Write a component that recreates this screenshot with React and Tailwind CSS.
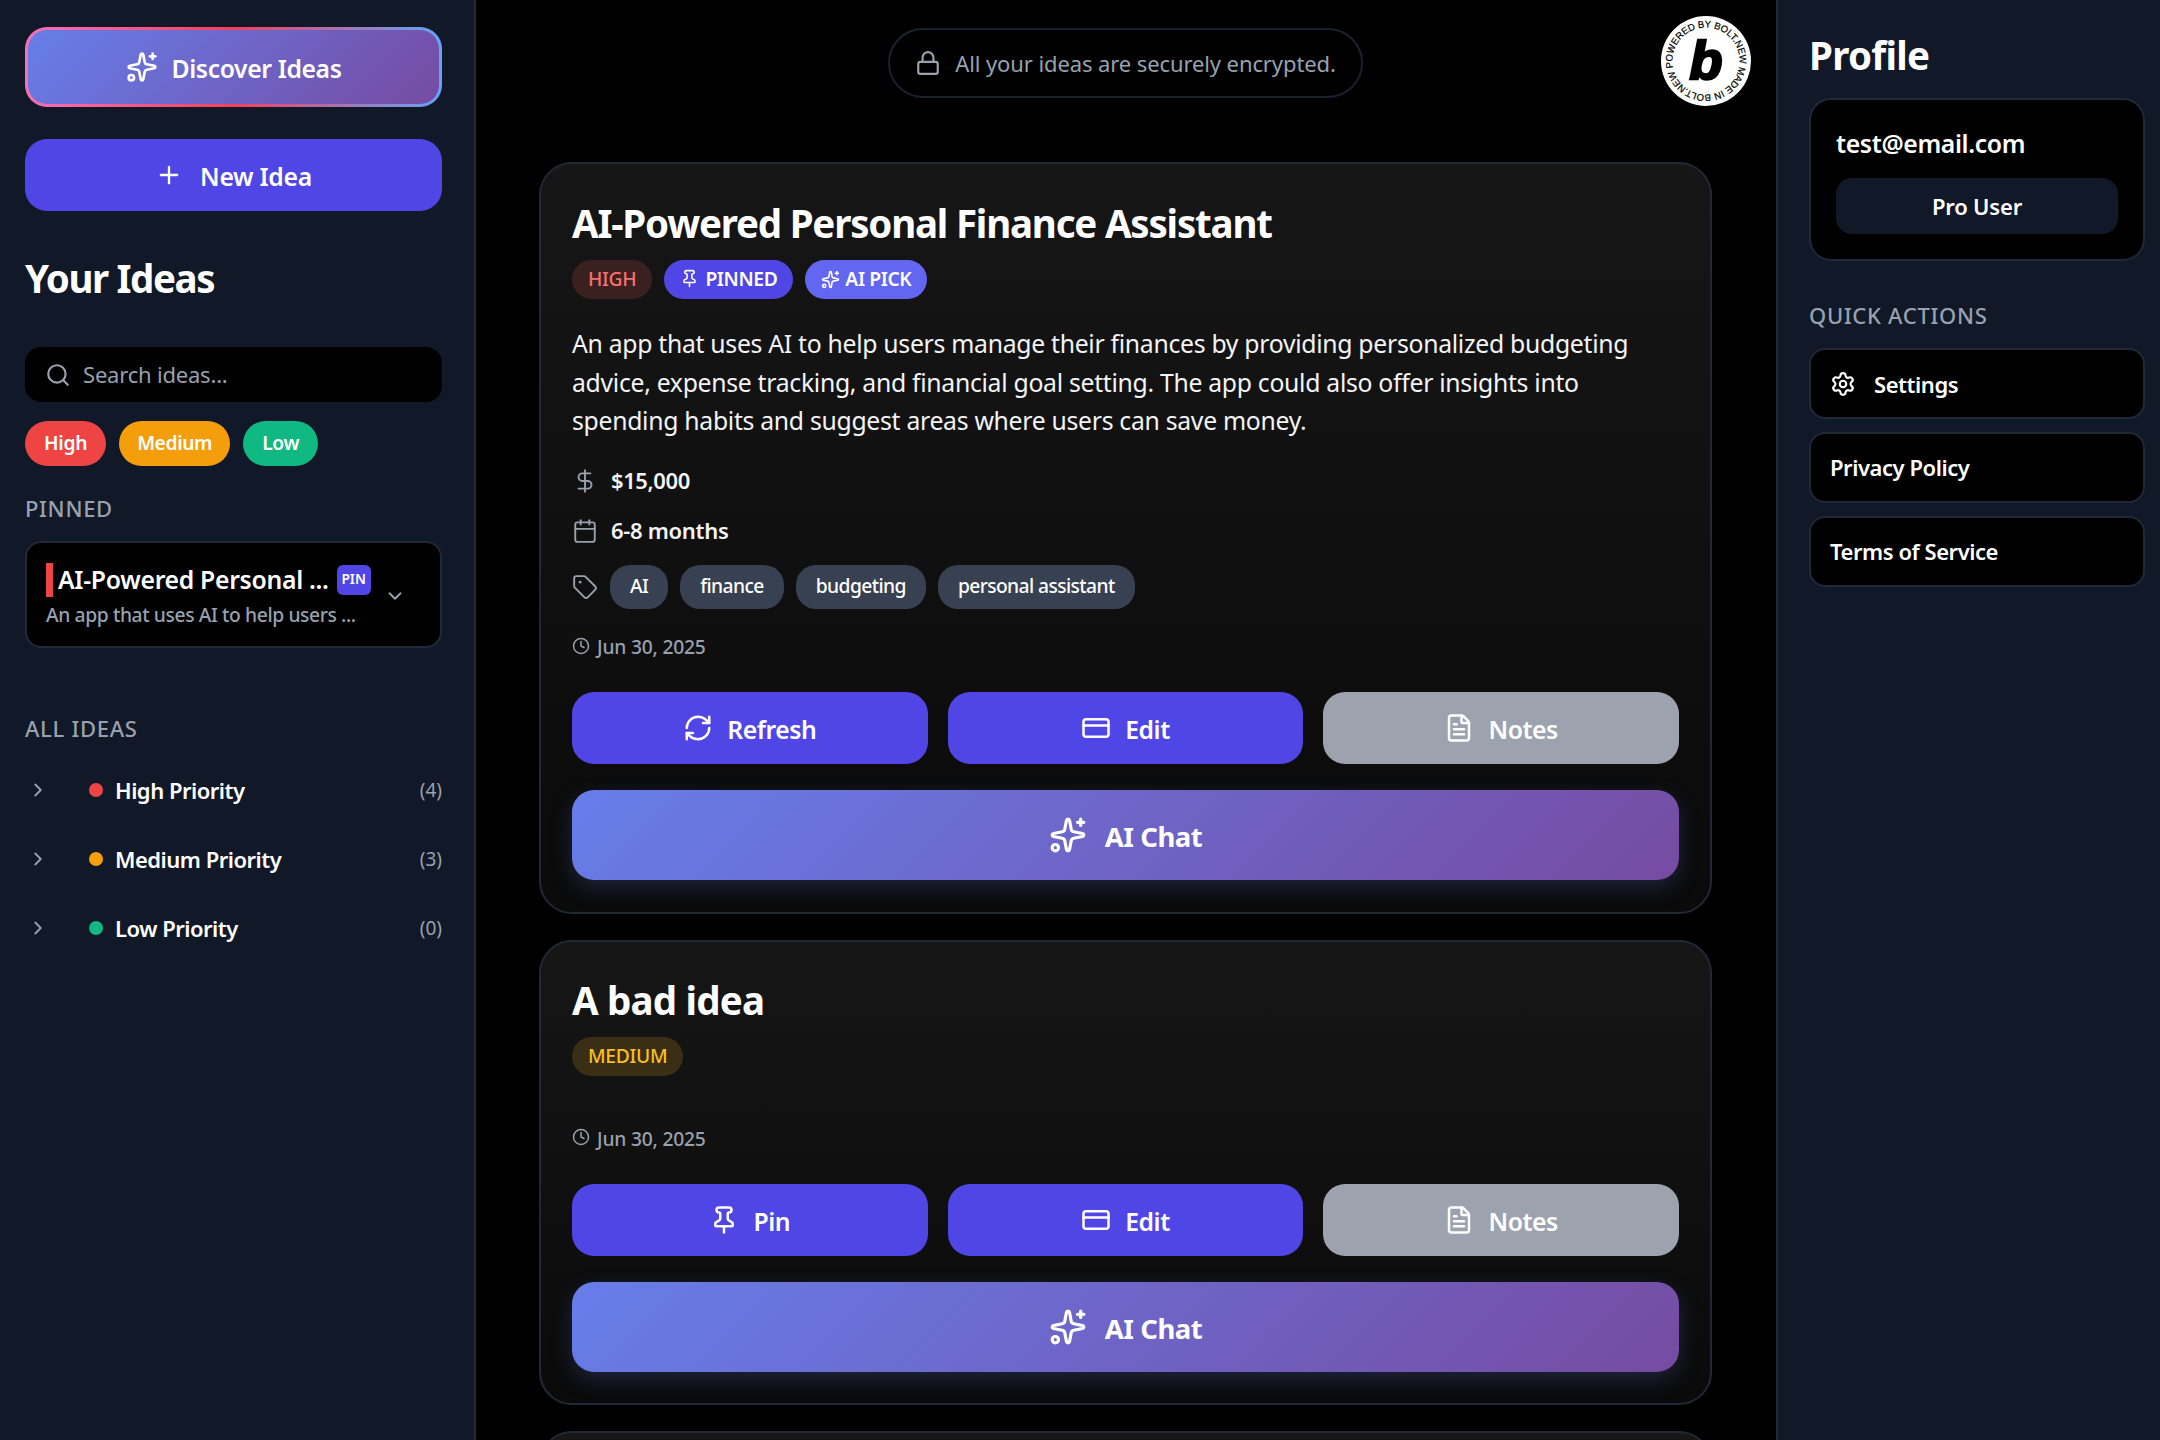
import {
  Sparkles, Plus, Search, ChevronDown, ChevronRight, Pin, DollarSign, Calendar,
  Tag, Clock, RefreshCw, CreditCard, FileText, Settings, Lock,
} from 'lucide-react';

const AI_GRADIENT = 'bg-[linear-gradient(135deg,#667eea_0%,#764ba2_100%)]';

function BoltBadge() {
  return (
    <svg viewBox="0 0 92 92" className="absolute right-[24px] top-[15px] w-[92px] h-[92px]">
      <circle cx="46" cy="46" r="45" fill="#fff" />
      <defs>
        <path id="ring" d="M 13.2 53 A 33.5 33.5 0 0 1 78.8 39 A 33.5 33.5 0 0 1 13.2 53" />
      </defs>
      <text fontFamily="'Liberation Sans', sans-serif" fontSize="9.6" stroke="#000" strokeWidth="0.2" fill="#000">
        <textPath href="#ring" textLength="208" lengthAdjust="spacing">POWERED BY BOLT.NEW MADE IN BOLT.NEW</textPath>
      </text>
      <text
        x="46" y="64" textAnchor="middle"
        fontFamily="'Liberation Sans', sans-serif" fontSize="54" fontWeight="700" fontStyle="italic"
        stroke="#000" strokeWidth="2.5" fill="#000"
      >
        b
      </text>
    </svg>
  );
}

function PriorityRow({ dot, label, count }) {
  return (
    <div className="flex items-center h-[69px]">
      <ChevronRight className="w-[22px] h-[22px] text-gray-400 ml-[2px] mr-[40px] -mt-[2px]" strokeWidth={2} />
      <span className={`w-[14px] h-[14px] rounded-full mr-[12px] -mt-[2px] ${dot}`} />
      <span className="text-[22px] font-semibold tracking-[-0.5px] text-white flex-1">{label}</span>
      <span className="text-[19px] text-gray-400">{count}</span>
    </div>
  );
}

function LeftSidebar() {
  return (
    <aside className="w-[476px] shrink-0 h-full bg-[#111827] border-r-2 border-[#1f2937] pl-[25px] pr-[32px] pt-[27px]">
      <div className="p-[3px] rounded-[22px] bg-[linear-gradient(90deg,#f472b6_0%,#f43f5e_50%,#60a5fa_100%)]">
        <button className={`w-full h-[74px] rounded-[19px] flex items-center justify-center gap-[14px] pt-[3px] text-[24.75px] font-semibold tracking-[-0.4px] text-white ${AI_GRADIENT}`}>
          <Sparkles className="w-[32px] h-[32px] -mt-[3px]" strokeWidth={2} />
          Discover Ideas
        </button>
      </div>
      <button className="w-full h-[72px] mt-[32px] rounded-[22px] flex items-center justify-center gap-[17px] pt-[3px] bg-[#4f46e5] text-[24.75px] font-semibold tracking-[-0.3px] text-white">
        <Plus className="w-[28px] h-[28px] -mt-[3px]" strokeWidth={2} />
        New Idea
      </button>

      <h2 className="mt-[41px] h-[52px] leading-[52px] text-[38.5px] font-bold tracking-[-1.4px] text-white">Your Ideas</h2>

      <div className="mt-[43px] h-[55px] rounded-[16px] bg-black flex items-center pl-[20px] gap-[12px]">
        <Search className="w-[26px] h-[26px] text-gray-400" strokeWidth={2} />
        <span className="text-[22px] tracking-[-0.2px] text-gray-400">Search ideas...</span>
      </div>

      <div className="flex gap-[13px] mt-[19px]">
        <span className="h-[45px] px-[19px] rounded-full bg-[#ef4444] text-white text-[19.25px] font-semibold tracking-[-0.3px] flex items-center">High</span>
        <span className="h-[45px] px-[18px] rounded-full bg-[#f59e0b] text-white text-[19.25px] font-semibold tracking-[-0.4px] flex items-center">Medium</span>
        <span className="h-[45px] px-[19px] rounded-full bg-[#10b981] text-white text-[19.25px] font-semibold tracking-[-0.3px] flex items-center">Low</span>
      </div>

      <div className="mt-[27px] h-[30px] leading-[30px] text-[22px] font-medium text-gray-400 tracking-[0.7px]">PINNED</div>

      <div className="mt-[18px] h-[107px] rounded-[16px] bg-black border-2 border-[#1f2937] pl-[19px] pr-[34px] pt-[2px] flex items-center">
        <div className="flex-1 min-w-0">
          <div className="flex items-center h-[36px]">
            <span className="w-[7px] h-[34px] bg-[#ef4444] mr-[5px] shrink-0" />
            <span className="text-[24.75px] font-semibold tracking-[-0.3px] text-white whitespace-nowrap">AI-Powered Personal ...</span>
            <span className="ml-[8px] w-[34px] h-[30px] rounded-[6px] bg-[#4f46e5] text-white text-[13.75px] font-semibold flex items-center justify-center shrink-0">PIN</span>
          </div>
          <div className="text-[19.25px] font-medium tracking-[-0.38px] text-gray-400 mt-[3px] whitespace-nowrap">An app that uses AI to help users ...</div>
        </div>
        <ChevronDown className="w-[22px] h-[22px] text-gray-400 shrink-0" strokeWidth={2} />
      </div>

      <div className="mt-[65px] h-[30px] leading-[30px] text-[22px] font-medium text-gray-400 tracking-[0.7px]">ALL IDEAS</div>
      <div className="mt-[13px]">
        <PriorityRow dot="bg-[#ef4444]" label="High Priority" count="(4)" />
        <PriorityRow dot="bg-[#f59e0b]" label="Medium Priority" count="(3)" />
        <PriorityRow dot="bg-[#10b981]" label="Low Priority" count="(0)" />
      </div>
    </aside>
  );
}

function ActionButton({ icon: Icon, label, color }) {
  return (
    <button className={`h-[72px] rounded-[22px] flex items-center justify-center gap-[14px] pt-[4px] text-[24.75px] font-semibold tracking-[-0.45px] text-white ${color}`}>
      <Icon className="w-[30px] h-[30px] -mt-[4px]" strokeWidth={2} />
      {label}
    </button>
  );
}

function IdeaActions({ firstIcon, firstLabel }) {
  return (
    <>
      <div className="grid grid-cols-3 gap-[20px]">
        <ActionButton icon={firstIcon} label={firstLabel} color="bg-[#4f46e5]" />
        <ActionButton icon={CreditCard} label="Edit" color="bg-[#4f46e5]" />
        <ActionButton icon={FileText} label="Notes" color="bg-[#9ca3af]" />
      </div>
      <button className={`w-full h-[90px] mt-[26px] rounded-[22px] flex items-center justify-center gap-[18px] pt-[4px] text-[27.5px] font-bold tracking-[-0.45px] text-white shadow-[0_8px_22px_rgba(102,126,234,0.22)] ${AI_GRADIENT}`}>
        <Sparkles className="w-[38px] h-[38px] -mt-[4px]" strokeWidth={2} />
        AI Chat
      </button>
    </>
  );
}

function DateLine({ className }) {
  return (
    <div className={`flex items-center gap-[7px] text-[19.25px] font-medium tracking-[-0.2px] text-gray-400 ${className}`}>
      <Clock className="w-[18px] h-[18px] -mt-[4px]" strokeWidth={2} />
      Jun 30, 2025
    </div>
  );
}

function FirstCard() {
  const tags = ['AI', 'finance', 'budgeting', 'personal assistant'];
  return (
    <section className="h-[752px] rounded-[33px] border-2 border-[#1f2937] bg-[linear-gradient(180deg,#161616_0%,#0a0a0a_100%)] px-[31px] pt-[31px]">
      <h3 className="h-[56px] leading-[56px] text-[38.5px] font-bold tracking-[-1.2px] text-white whitespace-nowrap">AI-Powered Personal Finance Assistant</h3>
      <div className="flex gap-[12px] mt-[9px]">
        <span className="h-[39px] px-[16px] rounded-full bg-[#3b2020] text-[#f87171] text-[19.25px] font-medium tracking-[-0.3px] flex items-center">HIGH</span>
        <span className="h-[39px] px-[16px] rounded-full bg-[#4f46e5] text-white text-[19.25px] font-semibold tracking-[-0.4px] flex items-center gap-[6px]">
          <Pin className="w-[19px] h-[19px] -mt-[2px]" strokeWidth={2} />
          PINNED
        </span>
        <span className="h-[39px] px-[16px] rounded-full bg-[#6366f1] text-white text-[19.25px] font-semibold tracking-[-0.4px] flex items-center gap-[5px]">
          <Sparkles className="w-[19px] h-[19px]" strokeWidth={2} />
          AI PICK
        </span>
      </div>
      <p className="mt-[26px] text-[24.75px] leading-[38.5px] tracking-[-0.29px] text-[#f3f4f6]">
        An app that uses AI to help users manage their finances by providing personalized budgeting advice, expense tracking, and financial goal setting. The app could also offer insights into spending habits and suggest areas where users can save money.
      </p>
      <div className="flex items-center mt-[20px] h-[40px] text-[22px] font-semibold tracking-[-0.4px] text-[#f3f4f6]">
        <DollarSign className="w-[26px] h-[26px] text-gray-400 mr-[13px]" strokeWidth={1.75} />
        $15,000
      </div>
      <div className="flex items-center mt-[10px] h-[40px] text-[22px] font-semibold tracking-[-0.3px] text-[#f3f4f6]">
        <Calendar className="w-[26px] h-[26px] text-gray-400 mr-[13px]" strokeWidth={1.75} />
        6-8 months
      </div>
      <div className="flex items-center mt-[14px] gap-[12px]">
        <Tag className="w-[26px] h-[26px] text-gray-400" strokeWidth={1.75} />
        {tags.map((tag) => (
          <span key={tag} className="h-[44px] px-[20px] rounded-[20px] bg-[#374151] text-white text-[19.25px] font-medium tracking-[-0.6px] flex items-center">{tag}</span>
        ))}
      </div>
      <DateLine className="mt-[25px] h-[28px]" />
      <div className="mt-[30px]">
        <IdeaActions firstIcon={RefreshCw} firstLabel="Refresh" />
      </div>
    </section>
  );
}

function SecondCard() {
  return (
    <section className="h-[465px] mt-[26px] rounded-[33px] border-2 border-[#1f2937] bg-[linear-gradient(180deg,#161616_0%,#0a0a0a_100%)] px-[31px] pt-[30px]">
      <h3 className="h-[56px] leading-[56px] text-[38.5px] font-bold tracking-[-0.8px] text-white">A bad idea</h3>
      <div className="flex mt-[9px]">
        <span className="h-[39px] px-[16px] rounded-full bg-[#3a2f14] text-[#fbbf24] text-[19.25px] font-medium tracking-[-0.3px] flex items-center">MEDIUM</span>
      </div>
      <DateLine className="mt-[49px] h-[28px]" />
      <div className="mt-[31px]">
        <IdeaActions firstIcon={Pin} firstLabel="Pin" />
      </div>
    </section>
  );
}

function RightSidebar() {
  const linkRow = 'h-[71px] rounded-[16px] bg-black border-2 border-[#1f2937] flex items-center text-[22px] font-semibold tracking-[-0.45px] text-white';
  return (
    <aside className="w-[384px] shrink-0 h-full bg-[#111827] border-l-2 border-[#1f2937] pl-[31px] pr-[15px] pt-[29px]">
      <h2 className="h-[52px] leading-[52px] text-[38.5px] font-bold tracking-[-0.7px] text-white">Profile</h2>
      <div className="mt-[17px] h-[163px] rounded-[22px] bg-black border-2 border-[#1f2937] px-[25px] pt-[26px]">
        <div className="h-[36px] leading-[36px] text-[24.75px] font-semibold tracking-[-0.35px] text-white">test@email.com</div>
        <div className="mt-[16px] h-[56px] rounded-[16px] bg-[#111827] pt-[1px] text-[22px] font-semibold tracking-[-0.2px] text-white flex items-center justify-center">Pro User</div>
      </div>
      <div className="mt-[39px] h-[30px] leading-[30px] text-[22px] font-medium text-gray-400 tracking-[0.7px]">QUICK ACTIONS</div>
      <div className={`mt-[18px] pl-[19px] pt-[1px] gap-[18px] ${linkRow}`}>
        <Settings className="w-[26px] h-[26px]" strokeWidth={2} />
        Settings
      </div>
      <div className={`mt-[13px] pl-[19px] ${linkRow}`}>Privacy Policy</div>
      <div className={`mt-[13px] pl-[19px] ${linkRow}`}>Terms of Service</div>
    </aside>
  );
}

export default function App() {
  return (
    <div className="flex h-screen w-full overflow-hidden bg-black font-['Noto_Sans',sans-serif]">
      <LeftSidebar />
      <main className="relative flex-1 min-w-0 h-full overflow-hidden pl-[63px] pr-[64px] pt-[28px]">
        <BoltBadge />
        <div className="flex justify-center">
          <div className="h-[70px] px-[25px] rounded-full bg-black border-2 border-[#1a2230] flex items-center gap-[14px] text-[22px] tracking-[-0.1px] text-gray-400">
            <Lock className="w-[26px] h-[26px]" strokeWidth={2} />
            All your ideas are securely encrypted.
          </div>
        </div>
        <div className="mt-[64px]">
          <FirstCard />
          <SecondCard />
          <section className="h-[300px] mt-[26px] rounded-[33px] border-2 border-[#1f2937] bg-[#161616]" />
        </div>
      </main>
      <RightSidebar />
    </div>
  );
}
